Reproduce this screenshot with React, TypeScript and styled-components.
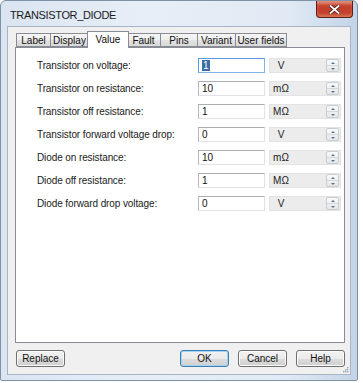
import React, { FC } from 'react';
import styled, { createGlobalStyle } from 'styled-components';

const GlobalStyle = createGlobalStyle`
  html, body {
    margin: 0;
    padding: 0;
    background: #ffffff;
  }
  body {
    font-family: "Liberation Sans", Arial, sans-serif;
  }
`;

const Window = styled.div`
  width: 358px;
  height: 381px;
  box-sizing: border-box;
  display: flex;
  flex-direction: column;
  background: linear-gradient(90deg, #dae5f2 0%, #e7eef7 40%, #e1eaf4 80%, #c3d4e8 100%);
  border: 1px solid #7f91a5;
  border-radius: 6px 6px 2px 2px;
  padding: 0 6px 5px 6px;
`;

const TitleBar = styled.div`
  height: 25px;
  flex-shrink: 0;
  display: flex;
  align-items: flex-start;
  justify-content: space-between;
`;

const Title = styled.span`
  margin: 8px 0 0 3px;
  font-size: 11px;
  letter-spacing: -0.35px;
  color: #1b1b1b;
`;

const CloseButton = styled.div`
  flex-shrink: 0;
  width: 37px;
  height: 17px;
  box-sizing: border-box;
  margin-right: -2px;
  border: 1px solid #5e1e16;
  border-top: none;
  border-radius: 0 0 4px 4px;
  background: #c4402c;
  box-shadow: inset 0 4px 3px -1px #df8a76, inset 0 -3px 3px -1px #d8785a;
  display: flex;
  align-items: center;
  justify-content: center;
`;

const Client = styled.div`
  flex: 1;
  display: flex;
  flex-direction: column;
  background: #f0f0f0;
  border: 1px solid #a7b5c4;
  padding: 3px 5px 0 7px;
  position: relative;
`;

const TabRow = styled.div`
  display: flex;
  align-items: flex-end;
  height: 17px;
  padding-left: 1px;
  position: relative;
  z-index: 1;
`;

const Tab = styled.div<{ width: number; active?: boolean }>`
  width: ${(p) => p.width}px;
  height: ${(p) => (p.active ? 17 : 14)}px;
  box-sizing: border-box;
  margin: ${(p) => (p.active ? '0 -2px -1px -2px' : '0')};
  border: 1px solid #898c95;
  border-left-width: ${(p) => (p.active ? 1 : 0)}px;
  border-bottom: ${(p) => (p.active ? 'none' : '1px solid #898c95')};
  background: ${(p) => (p.active ? '#ffffff' : 'linear-gradient(180deg, #f6f6f6 0%, #eeeeee 50%, #e3e3e3 51%, #d9d9d9 100%)')};
  font-size: 10px;
  color: #111;
  display: flex;
  justify-content: center;
  padding-top: ${(p) => (p.active ? 2 : 1)}px;
  position: relative;
  z-index: ${(p) => (p.active ? 2 : 1)};

  &:first-child {
    border-left-width: 1px;
  }
`;

const Panel = styled.div`
  height: 296px;
  box-sizing: border-box;
  background: #ffffff;
  border: 1px solid #898c95;
  padding: 10px 0 0 21px;
  display: flex;
  flex-direction: column;
  gap: 8px;
`;

const Row = styled.div`
  display: grid;
  grid-template-columns: 157px 67px 72px;
  column-gap: 4px;
  align-items: center;
  height: 15px;
`;

const Label = styled.span`
  font-size: 10px;
  color: #1a1a1a;
  letter-spacing: -0.1px;
`;

const Input = styled.div<{ focused?: boolean }>`
  height: 15px;
  box-sizing: border-box;
  background: #fff;
  border: 1px solid ${(p) => (p.focused ? '#7eb4ea' : '#e2e3ea')};
  border-top-color: ${(p) => (p.focused ? '#569de5' : '#abadb3')};
  border-left-color: ${(p) => (p.focused ? '#569de5' : '#b5b7bd')};
  font-size: 10px;
  color: #111;
  padding-left: 3px;
  display: flex;
  align-items: center;
`;

const Selected = styled.span`
  background: #3a6ea5;
  color: #ffffff;
  padding: 0 1px;
  line-height: 11px;
`;

const UnitBox = styled.div`
  height: 15px;
  box-sizing: border-box;
  background: #ececec;
  border: 1px solid #e3e3e3;
  display: flex;
  align-items: center;
  justify-content: space-between;
  font-size: 10px;
  color: #222;
`;

const UnitText = styled.span`
  width: 22px;
  text-align: center;
`;

const Spinner = styled.div`
  width: 13px;
  height: 13px;
  box-sizing: border-box;
  margin-right: 1px;
  border: 1px solid #c9cdd3;
  border-radius: 2px;
  display: flex;
  flex-direction: column;
  background: linear-gradient(180deg, #fafafa 0%, #e6e6e6 100%);
`;

const SpinHalf = styled.div<{ down?: boolean }>`
  flex: 1;
  display: flex;
  align-items: center;
  justify-content: center;
  border-top: ${(p) => (p.down ? '1px solid #d4d7dc' : 'none')};

  &::after {
    content: '';
    border-left: 2px solid transparent;
    border-right: 2px solid transparent;
    ${(p) => (p.down ? 'border-top: 2px solid #5a7390;' : 'border-bottom: 2px solid #5a7390;')}
  }
`;

const Footer = styled.div`
  display: flex;
  align-items: center;
  height: 30px;
  padding-left: 1px;
  gap: 9px;
`;

const Button = styled.div<{ primary?: boolean }>`
  width: 49px;
  height: 17px;
  box-sizing: border-box;
  border: 1px solid ${(p) => (p.primary ? '#3c7fb1' : '#707070')};
  border-radius: 3px;
  background: linear-gradient(180deg, #f2f2f2 0%, #ebebeb 50%, #dddddd 51%, #cfcfcf 100%);
  box-shadow: inset 0 0 0 1px ${(p) => (p.primary ? '#9ed6f3' : '#fcfcfc')};
  font-size: 10px;
  color: #111;
  display: flex;
  align-items: center;
  justify-content: center;
`;

const Spacer = styled.div`
  flex: 1;
`;

const Grip = styled.svg`
  position: absolute;
  right: 1px;
  bottom: 1px;
`;

interface Field {
  label: string;
  value: string;
  unit: string;
}

const fields: Field[] = [
  { label: 'Transistor on voltage:', value: '1', unit: 'V' },
  { label: 'Transistor on resistance:', value: '10', unit: 'mΩ' },
  { label: 'Transistor off resistance:', value: '1', unit: 'MΩ' },
  { label: 'Transistor forward voltage drop:', value: '0', unit: 'V' },
  { label: 'Diode on resistance:', value: '10', unit: 'mΩ' },
  { label: 'Diode off resistance:', value: '1', unit: 'MΩ' },
  { label: 'Diode forward drop voltage:', value: '0', unit: 'V' },
];

const tabs = [
  { name: 'Label', width: 35 },
  { name: 'Display', width: 38 },
  { name: 'Value', width: 42, active: true },
  { name: 'Fault', width: 34 },
  { name: 'Pins', width: 37 },
  { name: 'Variant', width: 38 },
  { name: 'User fields', width: 51 },
];

const App: FC = () => {
  return (
    <>
      <GlobalStyle />
      <Window>
        <TitleBar>
          <Title>TRANSISTOR_DIODE</Title>
          <CloseButton>
            <svg width="11" height="9" viewBox="0 0 11 9">
              <path d="M1.5 1 L9.5 8 M9.5 1 L1.5 8" stroke="#4a1a14" strokeWidth="3.4" strokeLinecap="square" />
              <path d="M1.5 1 L9.5 8 M9.5 1 L1.5 8" stroke="#ffffff" strokeWidth="1.8" strokeLinecap="square" />
            </svg>
          </CloseButton>
        </TitleBar>

        <Client>
          <TabRow>
            {tabs.map((t) => (
              <Tab key={t.name} width={t.width} active={t.active}>
                {t.name}
              </Tab>
            ))}
          </TabRow>

          <Panel>
            {fields.map((f, i) => (
              <Row key={f.label}>
                <Label>{f.label}</Label>
                <Input focused={i === 0}>{i === 0 ? <Selected>{f.value}</Selected> : f.value}</Input>
                <UnitBox>
                  <UnitText>{f.unit}</UnitText>
                  <Spinner>
                    <SpinHalf />
                    <SpinHalf down />
                  </Spinner>
                </UnitBox>
              </Row>
            ))}
          </Panel>

          <Footer>
            <Button>Replace</Button>
            <Spacer />
            <Button primary>OK</Button>
            <Button>Cancel</Button>
            <Button>Help</Button>
          </Footer>

          <Grip width="7" height="7" viewBox="0 0 7 7">
            <rect x="5" y="1" width="1.4" height="1.4" fill="#9aa3ad" />
            <rect x="3" y="3" width="1.4" height="1.4" fill="#9aa3ad" />
            <rect x="5" y="3" width="1.4" height="1.4" fill="#9aa3ad" />
            <rect x="1" y="5" width="1.4" height="1.4" fill="#9aa3ad" />
            <rect x="3" y="5" width="1.4" height="1.4" fill="#9aa3ad" />
            <rect x="5" y="5" width="1.4" height="1.4" fill="#9aa3ad" />
          </Grip>
        </Client>
      </Window>
    </>
  );
};

export default App;
